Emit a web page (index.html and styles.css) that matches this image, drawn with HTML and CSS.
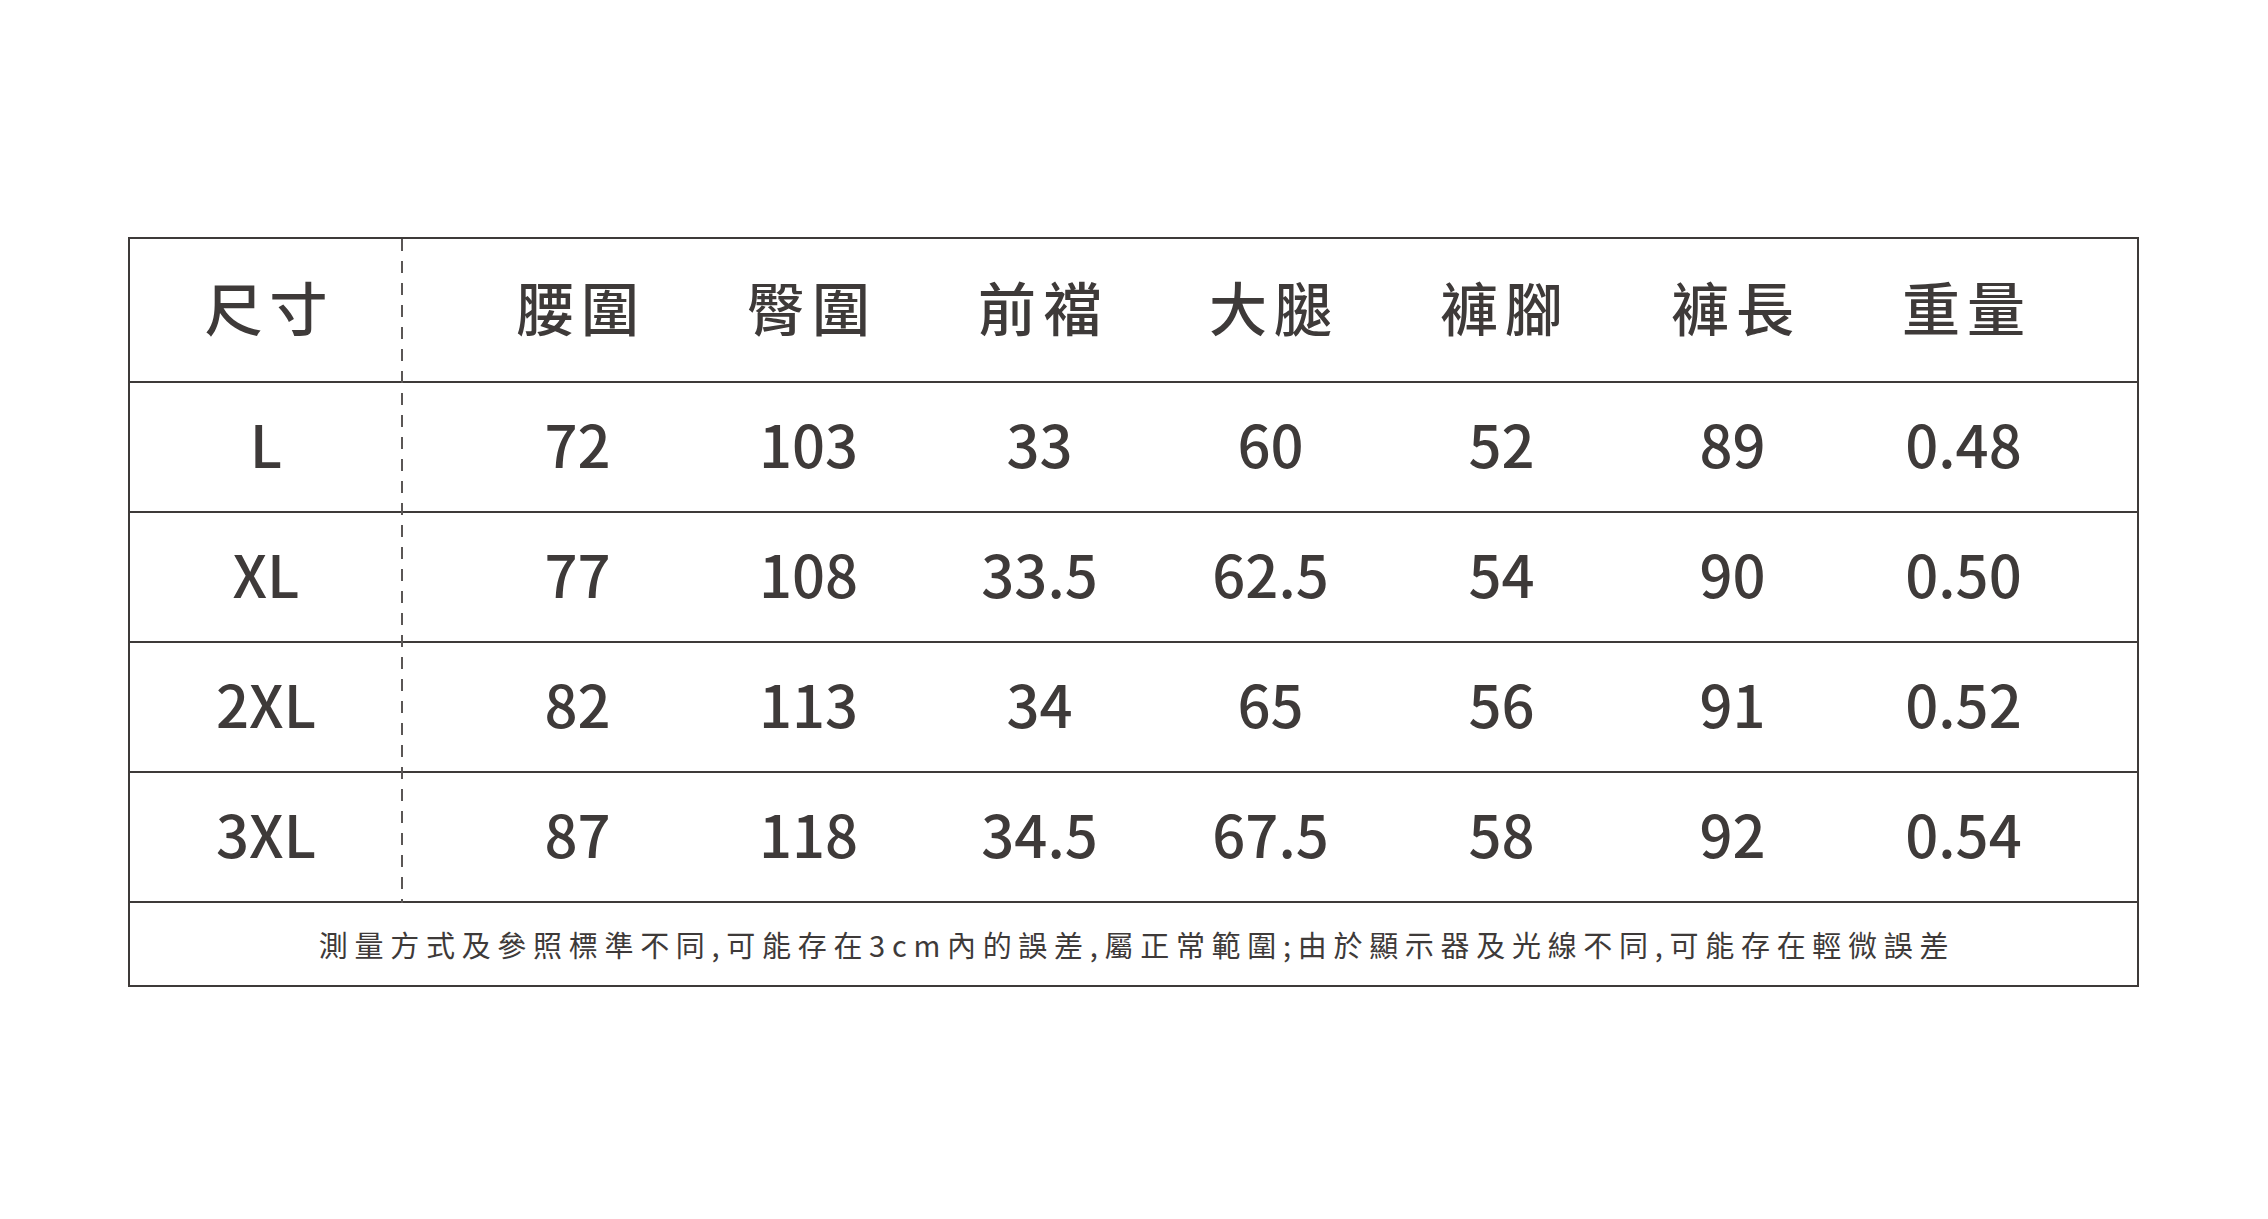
FILE: index.html
```html
<!DOCTYPE html>
<html lang="zh-Hant">
<head>
<meta charset="utf-8">
<title>尺寸表</title>
<link rel="stylesheet" href="styles.css">
</head>
<body>
<div class="chart">
  <div class="grid">
    <div class="row head">
      <div class="size"><span class="sp">尺寸</span></div>
      <div class="vals">
        <div class="cell"><span class="sp">腰圍</span></div>
        <div class="cell"><span class="sp">臀圍</span></div>
        <div class="cell"><span class="sp">前襠</span></div>
        <div class="cell"><span class="sp">大腿</span></div>
        <div class="cell"><span class="sp">褲腳</span></div>
        <div class="cell"><span class="sp">褲長</span></div>
        <div class="cell"><span class="sp">重量</span></div>
      </div>
    </div>
    <div class="row data">
      <div class="size">L</div>
      <div class="vals">
        <div class="cell">72</div><div class="cell">103</div><div class="cell">33</div><div class="cell">60</div><div class="cell">52</div><div class="cell">89</div><div class="cell">0.48</div>
      </div>
    </div>
    <div class="row data">
      <div class="size">XL</div>
      <div class="vals">
        <div class="cell">77</div><div class="cell">108</div><div class="cell">33.5</div><div class="cell">62.5</div><div class="cell">54</div><div class="cell">90</div><div class="cell">0.50</div>
      </div>
    </div>
    <div class="row data">
      <div class="size">2XL</div>
      <div class="vals">
        <div class="cell">82</div><div class="cell">113</div><div class="cell">34</div><div class="cell">65</div><div class="cell">56</div><div class="cell">91</div><div class="cell">0.52</div>
      </div>
    </div>
    <div class="row data">
      <div class="size">3XL</div>
      <div class="vals">
        <div class="cell">87</div><div class="cell">118</div><div class="cell">34.5</div><div class="cell">67.5</div><div class="cell">58</div><div class="cell">92</div><div class="cell">0.54</div>
      </div>
    </div>
  </div>
  <div class="note">測量方式及參照標準不同,可能存在3cm內的誤差,屬正常範圍;由於顯示器及光線不同,可能存在輕微誤差</div>
</div>
</body>
</html>
```
FILE: styles.css
```css
html, body {
  margin: 0;
  padding: 0;
  background: #ffffff;
}

body {
  font-family: "Noto Sans CJK TC", "Noto Sans", sans-serif;
  color: #3e3a39;
  padding-top: 237px;
}

.chart {
  box-sizing: border-box;
  width: 2011px;
  margin: 0 0 0 128px;
  border: 2px solid #3e3a39;
}

.grid {
  position: relative;
}

.grid::after {
  content: "";
  position: absolute;
  left: 271px;
  top: 0;
  bottom: 0;
  width: 2px;
  background: repeating-linear-gradient(to bottom, #5a5655 0 12px, transparent 12px 22px);
}

.row {
  display: flex;
  border-bottom: 2px solid #3e3a39;
}

.head {
  box-sizing: border-box;
  height: 144px;
  padding-bottom: 8px;
}

.data {
  box-sizing: border-box;
  height: 130px;
  padding-bottom: 8px;
}

.size {
  width: 272px;
  flex: none;
  display: flex;
  align-items: center;
  justify-content: center;
  font-size: 58px;
  font-weight: 500;
}

.vals {
  flex: 1;
  display: grid;
  grid-template-columns: repeat(7, 1fr);
  padding: 0 58px 0 60px;
}

.cell {
  display: flex;
  align-items: center;
  justify-content: center;
  font-size: 58px;
  font-weight: 500;
}

.sp {
  letter-spacing: 7px;
  padding-left: 7px;
}

.note {
  height: 82px;
  display: flex;
  align-items: center;
  justify-content: center;
  font-size: 29px;
  letter-spacing: 6.7px;
  padding-left: 7px;
  color: #3e3a39;
}
```
